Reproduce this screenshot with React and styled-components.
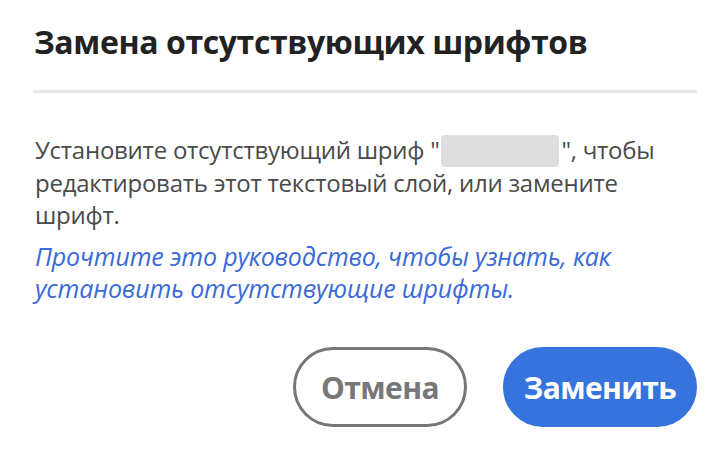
import styled, { createGlobalStyle } from "styled-components"

const GlobalStyle = createGlobalStyle`
  html, body {
    margin: 0;
    padding: 0;
    background: #ffffff;
  }
  body {
    font-family: "Open Sans", "Noto Sans", sans-serif;
  }
`

const Dialog = styled.div`
  width: 714px;
  height: 460px;
  box-sizing: border-box;
  padding: 20px 17px 0 34px;
  display: flex;
  flex-direction: column;
  background: #fff;
`

const Title = styled.h1`
  margin: 0;
  font-size: 32px;
  line-height: 44px;
  font-weight: 700;
  color: #222222;
  letter-spacing: -0.4px;
`

const Divider = styled.hr`
  margin: 26px 0 0 -1px;
  border: none;
  height: 3px;
  background: #e8e8e8;
`

const Body = styled.p`
  margin: 41px 0 0 1px;
  font-size: 24px;
  line-height: 32px;
  color: #4a4a4a;
  letter-spacing: -0.25px;
`

const FontName = styled.span`
  display: inline-block;
  width: 118px;
  height: 32px;
  margin: 0 2px;
  vertical-align: -8px;
  background: #dedede;
  border-radius: 4px;
`

const GuideLink = styled.a`
  display: block;
  margin: 9px 0 0 1px;
  font-size: 25px;
  line-height: 32px;
  font-style: italic;
  color: #3a6ad6;
  text-decoration: none;
  letter-spacing: -0.15px;
`

const Actions = styled.div`
  margin-top: auto;
  margin-bottom: 33px;
  display: flex;
  justify-content: flex-end;
  gap: 36px;
`

const Button = styled.button`
  height: 80px;
  width: ${(p) => p.$width}px;
  box-sizing: border-box;
  border-radius: 40px;
  font-family: "Open Sans", "Noto Sans", sans-serif;
  font-size: 30px;
  font-weight: 700;
  letter-spacing: -0.6px;
  cursor: pointer;
  border: 3px solid ${(p) => (p.$primary ? "#3673dc" : "#777777")};
  background: ${(p) => (p.$primary ? "#3673dc" : "#ffffff")};
  color: ${(p) => (p.$primary ? "#ffffff" : "#777777")};
`

const App = () => {
  return (
    <>
      <GlobalStyle />
      <Dialog>
        <Title>Замена отсутствующих шрифтов</Title>
        <Divider />
        <Body>
          Установите отсутствующий шриф "<FontName />", чтобы редактировать этот текстовый слой, или замените шрифт.
        </Body>
        <GuideLink href="#">
          Прочтите это руководство, чтобы узнать, как установить отсутствующие шрифты.
        </GuideLink>
        <Actions>
          <Button $width={174}>Отмена</Button>
          <Button $width={194} $primary>Заменить</Button>
        </Actions>
      </Dialog>
    </>
  )
}

export default App
